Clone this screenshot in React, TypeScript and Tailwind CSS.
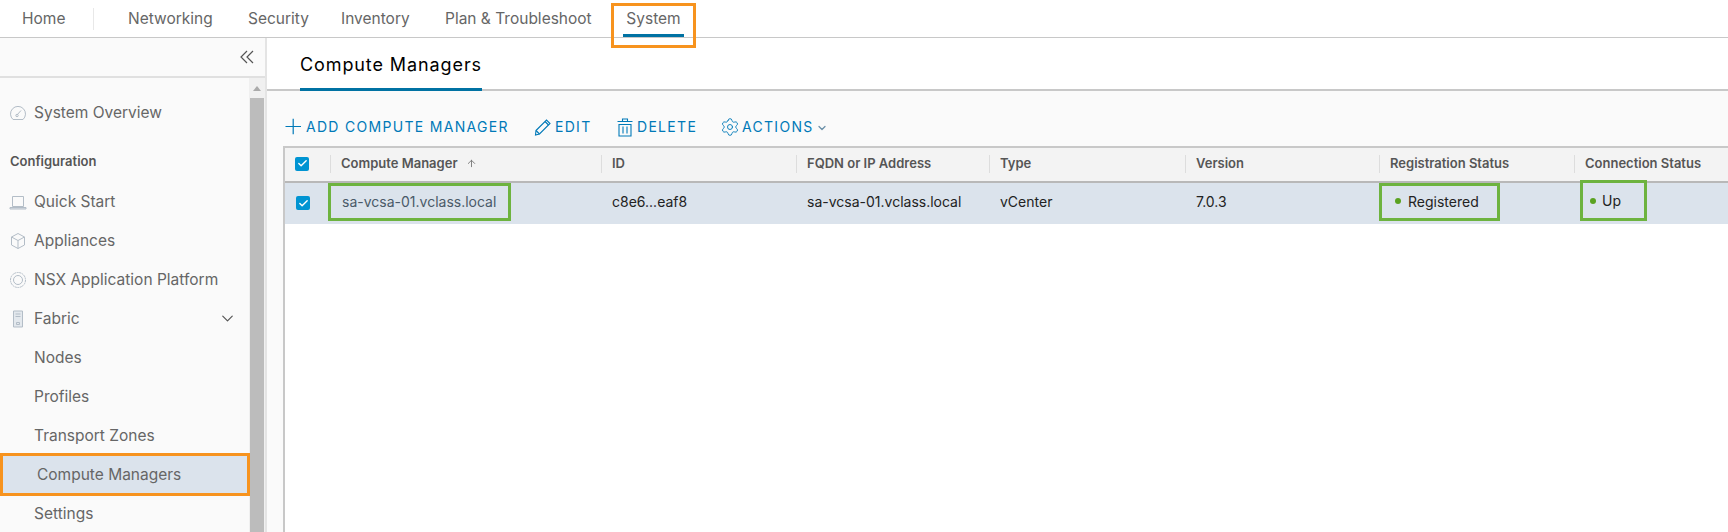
import { ArrowUp, Check, ChevronDown, Settings } from 'lucide-react'

const topLinks = [
  { label: 'Networking', width: 'w-[120px]' },
  { label: 'Security', width: 'w-[93px]' },
  { label: 'Inventory', width: 'w-[104px]' },
  { label: 'Plan & Troubleshoot', width: 'w-[178px]' },
]

const columns = ['Compute Manager', 'ID', 'FQDN or IP Address', 'Type', 'Version', 'Registration Status', 'Connection Status']
const gridCols = 'grid grid-cols-[45px_271px_195px_193px_196px_194px_195px_1fr]'

function SideIcon({ children }: { children: React.ReactNode }) {
  return (
    <svg viewBox="0 0 18 18" className="h-[18px] w-[18px] text-[#b3bdc7]" fill="none" stroke="currentColor" strokeWidth="1">
      {children}
    </svg>
  )
}

const overviewIcon = (
  <SideIcon>
    <path d="M4 15.5a7.5 7.5 0 1 1 10 0Z" />
    <path d="M7.8 11.2 12 6.5" />
    <circle cx="8" cy="11.5" r="1.2" />
  </SideIcon>
)
const quickStartIcon = (
  <SideIcon>
    <path d="M3.5 3.5h11v10h-11Z" />
    <path d="M1 14.5h16v1.5H1Z" fill="#dfe4e9" />
  </SideIcon>
)
const appliancesIcon = (
  <SideIcon>
    <path d="M9 1.5 15.5 5v8L9 16.5 2.5 13V5Z" />
    <path d="M2.5 5 9 8.5 15.5 5M9 8.5v8" />
  </SideIcon>
)
const platformIcon = (
  <SideIcon>
    <circle cx="9" cy="9" r="7.5" strokeDasharray="2 0.6" />
    <circle cx="9" cy="9" r="4.5" />
  </SideIcon>
)
const fabricIcon = (
  <SideIcon>
    <path d="M4.5 1h9v16h-9Z" fill="#e3e8ed" />
    <path d="M6.5 4h5M6.5 6.5h5M7.5 12.5h3v2h-3Z" />
  </SideIcon>
)

function SideItem({ label, icon, chevron }: { label: string; icon?: React.ReactNode; chevron?: boolean }) {
  return (
    <div className="flex h-[39px] items-center text-[15.5px] text-[#666]">
      <span className="flex w-[34px] shrink-0 justify-center pl-[2px]">{icon}</span>
      <span className="flex-1">{label}</span>
      {chevron && <ChevronDown size={19} strokeWidth={1.5} className="mr-[12px] text-[#555]" />}
    </div>
  )
}

function SubItem({ label }: { label: string }) {
  return <div className="flex h-[39px] items-center pl-[34px] text-[15.5px] text-[#666]">{label}</div>
}

function Tick() {
  return (
    <span className="flex h-[14px] w-[14px] items-center justify-center rounded-[2px] bg-[#0094d2]">
      <Check size={11} strokeWidth={3} className="text-white" />
    </span>
  )
}

function ToolButton({ icon, label, className }: { icon: React.ReactNode; label: string; className: string }) {
  return (
    <div className={`flex items-center gap-[2px] text-[14px] tracking-[1.3px] text-[#0079b8] ${className}`}>
      {icon}
      <span>{label}</span>
    </div>
  )
}

export default function App() {
  return (
    <div className="h-[532px] w-[1728px] overflow-hidden bg-white font-['Inter',sans-serif]">
      {/* Top nav */}
      <div className="flex h-[38px] items-center border-b border-[#c8c8c8] text-[15.5px] text-[#666]">
        <span className="w-[93px] pl-[22px]">Home</span>
        <span className="h-[22px] w-px bg-[#e8e8e8]" />
        <div className="flex pl-[34px]">
          {topLinks.map((l) => (
            <span key={l.label} className={l.width}>{l.label}</span>
          ))}
        </div>
        <div className="relative flex h-full w-[61px] items-center justify-center">
          System
          <span className="absolute inset-x-0 bottom-0 h-[3px] bg-[#0072a3]" />
          <span className="absolute -inset-x-[12px] top-[3px] -bottom-[11px] border-[3px] border-[#f7931e]" />
        </div>
      </div>

      <div className="flex h-[494px]">
        {/* Sidebar */}
        <aside className="flex w-[267px] shrink-0 flex-col border-r-2 border-[#e4e4e4] bg-[#fafafa]">
          <div className="flex h-[40px] shrink-0 items-center justify-end border-b-2 border-[#e0e0e0] pr-[10px]">
            <svg viewBox="0 0 16 16" className="h-[16px] w-[16px] text-[#555]" fill="none" stroke="currentColor" strokeWidth="1.2">
              <path d="M8 2 2 8l6 6M14 2 8 8l6 6" />
            </svg>
          </div>
          <div className="flex flex-1 overflow-hidden">
            <div className="flex-1">
              <div className="pt-[15px]">
                <SideItem label="System Overview" icon={overviewIcon} />
              </div>
              <div className="flex h-[43px] items-end pb-[4px] pl-[10px] text-[13px] font-semibold text-[#555]">Configuration</div>
              <div className="pt-[7px]">
                <SideItem label="Quick Start" icon={quickStartIcon} />
                <SideItem label="Appliances" icon={appliancesIcon} />
                <SideItem label="NSX Application Platform" icon={platformIcon} />
                <SideItem label="Fabric" icon={fabricIcon} chevron />
                <SubItem label="Nodes" />
                <SubItem label="Profiles" />
                <SubItem label="Transport Zones" />
                <div className="relative z-10 -my-[2px] -mr-px flex h-[43px] items-center border-[3px] border-[#f7931e] bg-[#dbe3ec] pl-[34px] text-[15.5px] text-[#666]">Compute Managers</div>
                <SubItem label="Settings" />
              </div>
            </div>
            <div className="flex w-[16px] shrink-0 flex-col bg-[#f0f0f0] px-px">
              <div className="flex h-[20px] items-center justify-center">
                <span className="h-0 w-0 border-x-[4px] border-b-[5px] border-x-transparent border-b-[#aaa]" />
              </div>
              <div className="flex-1 bg-[#bcbcbc]" />
            </div>
          </div>
        </aside>

        {/* Main */}
        <main className="flex-1 bg-[#fafafa]">
          <div className="flex h-[53px] items-end border-b-2 border-[#c8c8c8] bg-white pl-[33px]">
            <span className="-mb-[2px] flex h-[53px] items-center border-b-[3px] border-[#0072a3] pt-[2px] text-[18px] tracking-[0.9px] text-black">Compute Managers</span>
          </div>
          <div className="flex h-[55px] items-end pb-[9px] pl-[18px]">
            <ToolButton className="w-[248px]" label="ADD COMPUTE MANAGER" icon={
              <svg viewBox="0 0 19 19" className="h-[19px] w-[19px]" fill="none" stroke="currentColor" strokeWidth="1.2">
                <path d="M0.5 9.5h15.5M8.2 1.7v15.5" />
              </svg>
            } />
            <ToolButton className="w-[82px]" label="EDIT" icon={
              <svg viewBox="0 0 20 20" className="h-[20px] w-[20px]" fill="none" stroke="currentColor" strokeWidth="1.1">
                <path d="M3 13.5 13.5 3l3.5 3.5L6.5 17 2.5 18Z" />
                <path d="M3 13.5 6.5 17M12 4.5l3.5 3.5" />
              </svg>
            } />
            <ToolButton className="w-[105px]" label="DELETE" icon={
              <svg viewBox="0 0 20 20" className="h-[20px] w-[20px]" fill="none" stroke="currentColor" strokeWidth="1.1">
                <path d="M2.5 4.5h15M7.5 4.5V2h5v2.5M4 7.5h12V19H4ZM8 9.5v7M12 9.5v7" />
              </svg>
            } />
            <ToolButton className="" label="ACTIONS" icon={<Settings size={20} strokeWidth={1.1} />} />
            <ChevronDown size={12} strokeWidth={2.5} className="mb-[3px] ml-[2px] text-[#6a8fa8]" />
          </div>
          <div className="ml-[16px] h-[400px] border-l-2 border-t-2 border-[#c8c8c8] bg-white">
            <div className={`${gridCols} h-[35px] items-center border-b-2 border-[#b8b8b8] bg-[#f3f3f3] pb-[2px] text-[13px] font-semibold text-[#565656]`}>
              <span className="flex pl-[10px]"><Tick /></span>
              {columns.map((c) => (
                <span key={c} className="flex h-[18px] items-center gap-[8px] border-l border-[#ddd] pl-[10px]">
                  {c}
                  {c === 'Compute Manager' && <ArrowUp size={11} className="text-[#777]" />}
                </span>
              ))}
            </div>
            <div className={`${gridCols} h-[41px] items-center bg-[#dbe3ec] pb-[3px] text-[14px] text-[#222]`}>
              <span className="flex pl-[11px] pt-[2px]"><Tick /></span>
              <span className="-ml-[2px] flex">
                <span className="flex h-[38px] w-[183px] items-center border-[3px] border-[#6db33f] pb-[2px] pl-[11px] text-[#4a5a68]">sa-vcsa-01.vclass.local</span>
              </span>
              <span className="-mt-[2px] pl-[11px]">c8e6...eaf8</span>
              <span className="-mt-[2px] pl-[11px]">sa-vcsa-01.vclass.local</span>
              <span className="-mt-[2px] pl-[11px]">vCenter</span>
              <span className="-mt-[2px] pl-[11px]">7.0.3</span>
              <span className="flex">
                <span className="flex h-[38px] w-[121px] items-center gap-[7px] border-[3px] border-[#6db33f] pb-[2px] pl-[13px]">
                  <span className="h-[6px] w-[6px] rounded-full bg-[#5aa220]" />Registered
                </span>
              </span>
              <span className="ml-[6px] flex">
                <span className="-mt-[3px] flex h-[41px] w-[67px] items-center gap-[6px] border-[3px] border-[#6db33f] pl-[7px]">
                  <span className="h-[6px] w-[6px] rounded-full bg-[#5aa220]" />Up
                </span>
              </span>
            </div>
          </div>
        </main>
      </div>
    </div>
  )
}
